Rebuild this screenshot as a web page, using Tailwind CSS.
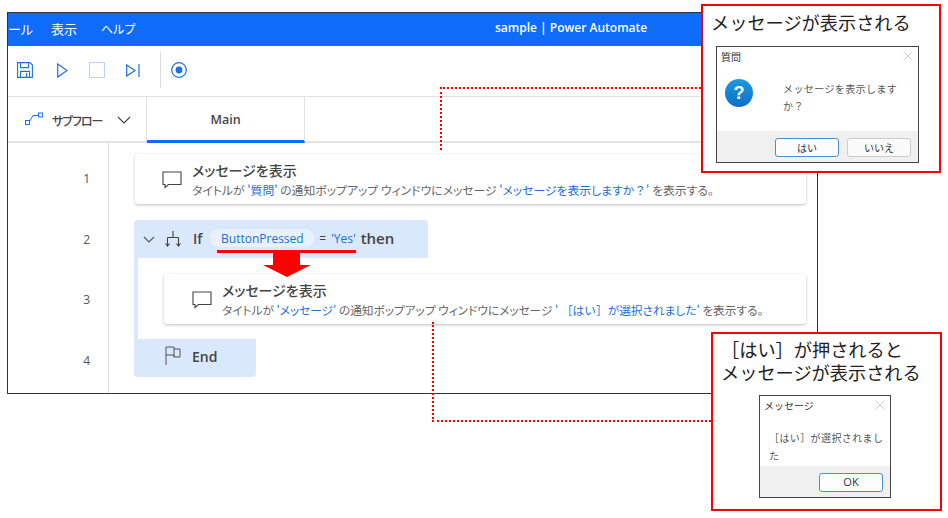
<!DOCTYPE html>
<html lang="ja">
<head>
  <meta charset="UTF-8">
  <title>sample | Power Automate</title>
  <script src="https://cdn.jsdelivr.net/npm/@tailwindcss/browser@4"></script>
</head>
<body class="bg-white">
  <div class="relative w-[948px] h-[518px] overflow-hidden bg-white font-['Noto_Sans_CJK_JP','Noto_Sans',sans-serif]">

    <!-- app window -->
    <div class="absolute left-[7px] top-[12px] w-[811px] h-[382px] border border-[#333] flex flex-col bg-white text-[#333] [font-feature-settings:'palt']">
      <div class="h-[33px] bg-[#0f6cfb] text-white flex items-center text-[13px] shrink-0 relative">
        <span class="w-[43px] overflow-hidden text-left -mt-[2px]">ール</span>
        <span class="-mt-[2px]">表示</span>
        <span class="ml-[24px] -mt-[2px] text-[12px]">ヘルプ</span>
        <span class="absolute left-[487px] top-[6px] text-[12px] whitespace-nowrap font-['Open_Sans',sans-serif] font-semibold">sample | Power Automate</span>
      </div>

      <div class="h-[51px] flex items-center border-b border-[#e1e1e1] shrink-0 pl-[9px] pb-[2px]">
        <svg class="w-[16px] h-[16px]" viewBox="0 0 16 16" fill="none" stroke="#1e6fe8" stroke-width="1.1">
          <path d="M0.6 0.6h12.4l2.4 2.4v12.4H0.6z"/><path d="M3.5 0.6v5h8v-5M3.5 15.4v-6h9v6M9.5 11v4.4"/>
        </svg>
        <svg class="w-[11px] h-[15px] ml-[24px]" viewBox="0 0 11 15" fill="none" stroke="#1e6fe8" stroke-width="1.2">
          <path d="M0.7 0.9L10 7.5 0.7 14.1z"/>
        </svg>
        <div class="w-[16px] h-[16px] ml-[21px] border border-[#b9d3f8]"></div>
        <svg class="w-[14px] h-[13px] ml-[21px]" viewBox="0 0 14 13" fill="none" stroke="#1e6fe8" stroke-width="1.2">
          <path d="M0.7 0.9L9 6.5 0.7 12.1zM13 0v13"/>
        </svg>
        <div class="w-px h-[36px] bg-[#ddd] ml-[20px]"></div>
        <svg class="w-[16px] h-[16px] ml-[10px]" viewBox="0 0 16 16" fill="none">
          <circle cx="8" cy="8" r="7.3" stroke="#1e6fe8" stroke-width="1.2"/><circle cx="8" cy="8" r="3.4" fill="#1e6fe8"/>
        </svg>
      </div>

      <div class="h-[46px] flex border-b-2 border-[#e3e3e3] shrink-0">
        <div class="w-[139px] flex items-center border-r border-[#e3e3e3] pl-[17px] text-[12px] font-medium text-[#444]">
          <svg class="w-[18px] h-[14px]" viewBox="0 0 18 14" fill="none" stroke="#1e6fe8" stroke-width="1">
            <rect x="0.5" y="8.5" width="4" height="4"/><rect x="13.5" y="1" width="4" height="4"/><path d="M4.5 9.5L8 3.5h5.5"/>
          </svg>
          <span class="ml-[9px] mt-[3px] w-[56px] whitespace-nowrap tracking-[-1px]">サブフロー</span>
          <svg class="w-[14px] h-[8px] ml-[9px] mt-[2px]" viewBox="0 0 14 8" fill="none" stroke="#444" stroke-width="1.1"><path d="M1 1l6 6 6-6"/></svg>
        </div>
        <div class="w-[158px] -mb-[2px] pt-[3px] flex items-center justify-center border-r border-[#e3e3e3] border-b-[3px] border-b-[#0f6cfb] text-[12.5px] font-semibold text-[#444] font-['Open_Sans',sans-serif]">Main</div>
      </div>

      <div class="flex-1 flex min-h-0">
        <div class="w-[101px] border-r border-[#ddd] shrink-0 flex flex-col pt-[27px] pr-[18px] items-end text-[12px] text-[#555] font-['Open_Sans',sans-serif] gap-[42.5px]">
          <span>1</span><span>2</span><span>3</span><span>4</span>
        </div>

        <div class="flex-1 pt-[11px] pl-[25px] pr-[11px] text-[#444]">
          <div class="h-[50px] ml-px bg-white rounded-[3px] shadow-[0_1px_3px_rgba(0,0,0,0.25)] flex items-center pl-[27px]">
            <svg class="w-[20px] h-[19px] shrink-0" viewBox="0 0 20 19" fill="none" stroke="#444" stroke-width="1.1"><path d="M1 2h18v12.5H6.5L3 17.5v-3H1z"/></svg>
            <div class="ml-[10px] -mt-[1px]">
              <div class="text-[14px] leading-[20px] mb-[2px] font-medium">メッセージを表示</div>
              <div class="text-[11.85px] leading-[16px] text-[#666] whitespace-nowrap">タイトルが <span class="text-[#1a6fe0]">'質問'</span> の通知ポップアップ ウィンドウにメッセージ <span class="text-[#1a6fe0]">'メッセージを表示しますか<span class="[font-feature-settings:normal]">？</span>'</span> を表示する。</div>
            </div>
          </div>

          <div class="mt-[16px] w-[294px] h-[38px] bg-[#dae8fc] rounded-t-[4px] flex items-center pl-[9px] text-[#444]">
            <svg class="w-[12px] h-[7px]" viewBox="0 0 12 7" fill="none" stroke="#555" stroke-width="1.1"><path d="M1 1l5 5 5-5"/></svg>
            <svg class="w-[16px] h-[18px] ml-[10px]" viewBox="0 0 16 18" fill="none" stroke="#444" stroke-width="1.1"><path d="M8 1v6M2.5 7.5h11M2.5 7.5v8M13.5 7.5v8M0.5 13.5l2 2.5 2-2.5M11.5 13.5l2 2.5 2-2.5"/></svg>
            <span class="ml-[12px] -mt-[1px] text-[14px] font-semibold font-['Open_Sans',sans-serif]">If</span>
            <span class="ml-[8px] -mt-[3px] h-[18px] w-[104px] rounded-full bg-[#e9f1fd] flex items-center justify-center pt-[2px] text-[12px] text-[#1a6fe0] font-['Open_Sans',sans-serif]">ButtonPressed</span>
            <span class="ml-[5px] text-[12px] font-['Open_Sans',sans-serif]">=</span>
            <span class="ml-[5px] -mt-[1px] text-[12px] text-[#1a6fe0] font-['Open_Sans',sans-serif]">'Yes'</span>
            <span class="ml-[5px] -mt-[1px] text-[15px] font-semibold font-['Open_Sans',sans-serif]">then</span>
          </div>

          <div class="h-[81px] border-l-[4px] border-[#dae8fc] pl-[26px] pt-[16px]">
            <div class="h-[50px] bg-white rounded-[3px] shadow-[0_1px_3px_rgba(0,0,0,0.25)] flex items-center pl-[28px]">
              <svg class="w-[20px] h-[19px] shrink-0" viewBox="0 0 20 19" fill="none" stroke="#444" stroke-width="1.1"><path d="M1 2h18v12.5H6.5L3 17.5v-3H1z"/></svg>
              <div class="ml-[10px] -mt-[1px]">
                <div class="text-[14px] leading-[20px] mb-[2px] font-medium">メッセージを表示</div>
                <div class="text-[11.7px] leading-[16px] text-[#666] whitespace-nowrap">タイトルが <span class="text-[#1a6fe0]">'メッセージ'</span> の通知ポップアップ ウィンドウにメッセージ <span class="text-[#1a6fe0]">' <span class="[font-feature-settings:normal]">［はい］</span>が選択されました'</span> を表示する。</div>
              </div>
            </div>
          </div>

          <div class="w-[122px] h-[38px] bg-[#dae8fc] rounded-b-[4px] flex items-center pl-[31px]">
            <svg class="w-[16px] h-[20px] -mt-[5px]" viewBox="0 0 16 20" fill="none" stroke="#555" stroke-width="1"><path d="M1 1v18M1 1h8v2h6v8H9V3M1 9h8v2"/></svg>
            <span class="ml-[11px] -mt-[3px] text-[14px] font-semibold font-['Open_Sans',sans-serif]">End</span>
          </div>
        </div>
      </div>
    </div>

    <!-- red annotation lines -->
    <div class="absolute left-[440px] top-[87px] w-[261px] border-t-2 border-dotted border-[#f00]"></div>
    <div class="absolute left-[440px] top-[87px] h-[63px] border-l-2 border-dotted border-[#f00]"></div>
    <div class="absolute left-[432px] top-[322px] h-[100px] border-l-2 border-dotted border-[#f00]"></div>
    <div class="absolute left-[432px] top-[420px] w-[279px] border-t-2 border-dotted border-[#f00]"></div>
    <div class="absolute left-[217px] top-[250px] w-[139px] h-[3px] bg-[#f00]"></div>
    <svg class="absolute left-[263px] top-[252px]" width="48" height="25" viewBox="0 0 48 25"><path d="M10 0h27v13h11L24 25 0 13h10z" fill="#f00"/></svg>

    <!-- callout 1 -->
    <div class="absolute left-[701px] top-[4px] w-[240px] h-[169px] border-2 border-[#f00] bg-white">
      <div class="pl-[8px] pt-[3px] text-[18.2px] leading-[26px] text-[#222] whitespace-nowrap">メッセージが表示される</div>
      <div class="absolute left-[13px] top-[40px] w-[203px] h-[117px] border border-[#444] bg-white flex flex-col">
        <div class="h-[18px] flex items-center justify-between px-[4px] text-[10px] text-[#333]">
          <span>質問</span>
          <svg class="w-[10px] h-[10px] mr-[1px]" viewBox="0 0 10 10" stroke="#ccc" stroke-width="1"><path d="M0.5 0.5l9 9M9.5 0.5l-9 9"/></svg>
        </div>
        <div class="flex-1 flex pl-[8px] pt-[14px]">
          <div class="w-[28px] h-[28px] rounded-full bg-gradient-to-b from-[#1e9ae0] to-[#0f6fc6] text-white flex items-center justify-center text-[18px] font-bold font-['Liberation_Sans',sans-serif] shrink-0">?</div>
          <div class="ml-[30px] mt-[1px] w-[120px] text-[10px] leading-[17px] tracking-[0.4px] text-[#555]">メッセージを表示しますか？</div>
        </div>
        <div class="h-[31px] bg-[#f0f0f0] flex items-start pt-[7px] justify-end gap-[8px] pr-[7px] text-[10px] text-[#333]">
          <div class="w-[64px] h-[19px] rounded-[3px] border border-[#4a90d0] bg-[#fdfdfd] flex items-center justify-center">はい</div>
          <div class="w-[64px] h-[19px] rounded-[3px] border border-[#ccc] bg-[#fafafa] flex items-center justify-center">いいえ</div>
        </div>
      </div>
    </div>

    <!-- callout 2 -->
    <div class="absolute left-[711px] top-[332px] w-[231px] h-[179px] border-2 border-[#f00] bg-white">
      <div class="pt-[4px] pl-[8px] text-[18.2px] leading-[23px] text-[#222] whitespace-nowrap">
        <div class="h-[23px]">［はい］が押されると</div>
        <div class="h-[23px]">メッセージが表示される</div>
      </div>
      <div class="absolute left-[46px] top-[61px] w-[132px] h-[103px] border border-[#444] bg-white flex flex-col">
        <div class="h-[18px] flex items-center justify-between px-[4px] text-[10px] text-[#333]">
          <span>メッセージ</span>
          <svg class="w-[10px] h-[10px] mr-[1px]" viewBox="0 0 10 10" stroke="#ccc" stroke-width="1"><path d="M0.5 0.5l9 9M9.5 0.5l-9 9"/></svg>
        </div>
        <div class="flex-1 pl-[9px] pt-[15px] text-[10px] leading-[18px] tracking-[0.4px] text-[#555]">［はい］が選択されました</div>
        <div class="h-[31px] bg-[#f0f0f0] flex items-start pt-[7px] justify-end pr-[7px] text-[11px] text-[#333]">
          <div class="w-[64px] h-[19px] rounded-[3px] border border-[#4a90d0] bg-[#fdfdfd] flex items-center justify-center font-['Open_Sans',sans-serif]">OK</div>
        </div>
      </div>
    </div>

  </div>
</body>
</html>
